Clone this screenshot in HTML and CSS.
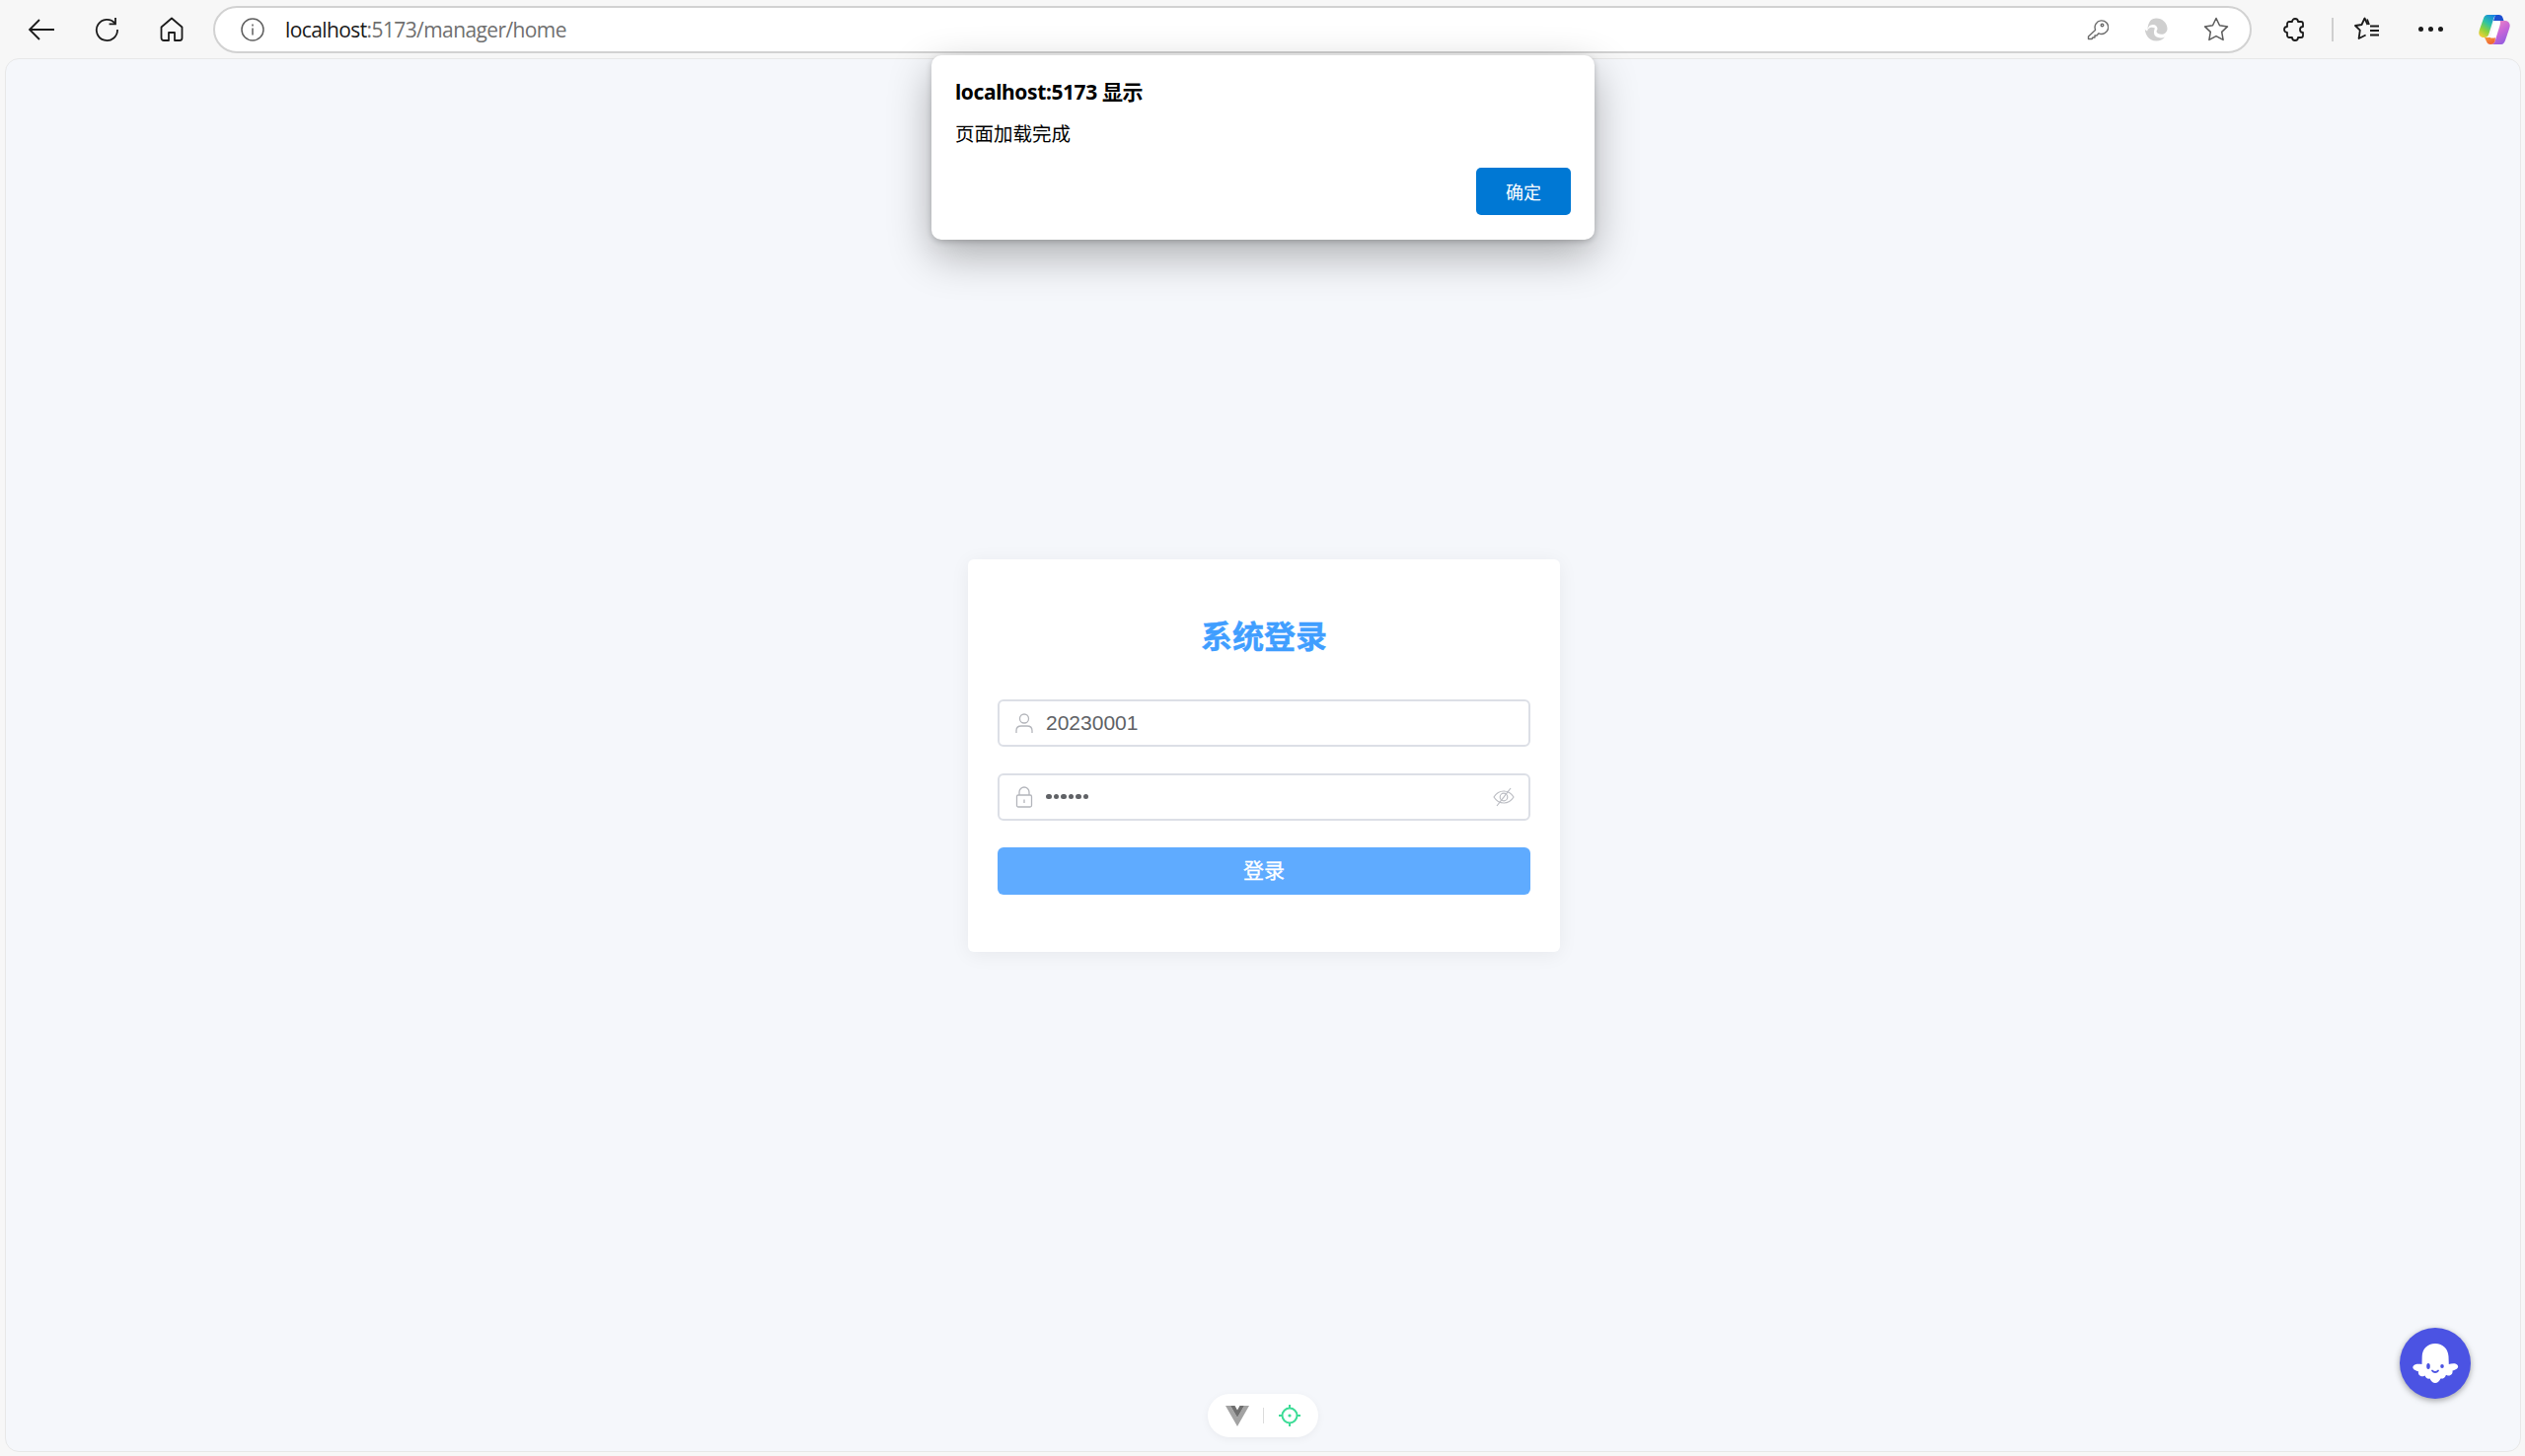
FILE: index.html
```html
<!DOCTYPE html>
<html lang="zh-CN">
<head>
<meta charset="utf-8">
<title>系统登录</title>
<link rel="stylesheet" href="styles.css">
</head>
<body>
<div class="browser">
  <header class="toolbar">
    <div class="nav">
      <span class="tool"><svg width="28" height="24" viewBox="0 0 28 24" fill="none" stroke="#1b1b1b" stroke-width="1.8"><path d="M2 12H27M12 2 2 12l10 10"/></svg></span>
      <span class="tool"><svg width="26" height="26" viewBox="0 0 26 26" fill="none" stroke="#1b1b1b" stroke-width="1.8"><path d="M21.5 6.6A10.6 10.6 0 1 0 24 13"/><path d="M22 1v6.4h-6.4"/></svg></span>
      <span class="tool"><svg width="24" height="26" viewBox="0 0 24 26" fill="none" stroke="#1b1b1b" stroke-width="1.8" stroke-linejoin="round"><path d="M9 24H4a2.500 2.500 0 0 1-2.500-2.500V10.500L12 1.500l10.500 9v11A2.500 2.500 0 0 1 20 24h-5v-8H9z"/></svg></span>
    </div>
    <div class="omnibox">
      <svg class="info" width="24" height="24" viewBox="0 0 24 24" fill="none" stroke="#5f5f5f" stroke-width="1.500"><circle cx="12" cy="12" r="11"/><path d="M12 10.500v7M12 6.500v2"/></svg>
      <span class="url"><span class="host">localhost</span>:5173/manager/home</span>
      <div class="omni-actions">
        <svg width="22" height="22" viewBox="0 0 22 22" fill="none" stroke="#6b6b6b" stroke-width="1.400" stroke-linejoin="round"><path d="M8.500 11.500 1.500 18v2.500h3.500l1-1.500h2v-2h2l2-2.200a6.800 6.800 0 1 0-3.500-3.800z"/><circle cx="15.500" cy="6.500" r="1.300"/></svg>
        <svg width="24" height="24" viewBox="0 0 24 24"><path fill="#cfcfcf" d="M12 0.500C18.800 0.500 23.500 5.500 23.500 11c0 3.500-2.800 5.800-6 5.800-2.400 0-5-1-5-3 0-1 1-1.300 1-2.800C13.500 8.800 11.500 7 9 7 5.500 7 3.500 9.800 3.500 13c0-3 .5-12.500 8.500-12.500z"/><path fill="#cfcfcf" d="M.8 11.500C1 16 4 23.500 12.500 23.500c3.500 0 6.500-1.500 8.500-4-2 1-4.500 1.200-6.800.5-3.800-1-4.200-3.500-4.200-5.500 0-1.500.5-3 1-4C7 9 4 10 3.200 13.500 2.500 13.500 1.500 12.500.8 11.500z"/></svg>
        <svg width="26" height="25" viewBox="0 0 26 25" fill="none" stroke="#5c5c5c" stroke-width="1.500" stroke-linejoin="round"><path d="M13 1.500l3.500 7.300 8 1.100-5.800 5.500 1.400 8-7.100-3.800-7.100 3.800 1.400-8L1.500 9.900l8-1.100z"/></svg>
      </div>
    </div>
    <div class="actions">
      <span class="action puzzle"><svg width="26" height="26" viewBox="0 0 26 26" fill="none" stroke="#1b1b1b" stroke-width="1.800" stroke-linejoin="round"><path d="M10 5a3 3 0 0 1 6 0h3a2 2 0 0 1 2 2v3a3 3 0 0 0 0 6v3a2 2 0 0 1-2 2h-3a3 3 0 0 1-6 0H7a2 2 0 0 1-2-2v-3a3 3 0 0 1 0-6V7a2 2 0 0 1 2-2z"/></svg></span>
      <span class="divider"></span>
      <span class="action fav"><svg width="26" height="25" viewBox="0 0 26 25" fill="none" stroke="#1b1b1b" stroke-width="1.800" stroke-linejoin="round"><path d="M13.500 8 10.500 1.500 7.500 8 1 9l4.800 4.700L4.600 22l7-3.500"/><path d="M13 2.500 15 8M16 9.500h9M16 14h9M16 18.500h9"/></svg></span>
      <span class="action dots"><i></i><i></i><i></i></span>
      <span class="action copilot"><svg width="32" height="32" viewBox="0 0 32 32"><defs><linearGradient id="cpa" x1=".75" y1="0" x2=".15" y2="1"><stop offset="0" stop-color="#1580e6"/><stop offset=".4" stop-color="#2cc3a6"/><stop offset=".7" stop-color="#8fd23a"/><stop offset="1" stop-color="#f7cf3a"/></linearGradient><linearGradient id="cpb" x1=".2" y1="0" x2=".8" y2="1"><stop offset="0" stop-color="#f08ac0"/><stop offset=".5" stop-color="#c765d8"/><stop offset="1" stop-color="#8a5be0"/></linearGradient><linearGradient id="cpc" x1="0" y1="0" x2="1" y2="1"><stop offset="0" stop-color="#f9a23c"/><stop offset="1" stop-color="#e9452f"/></linearGradient></defs><path fill="#1d4fd0" d="M17 1h3.500c2 0 3.500 1 4 3l1 3H15z"/><path fill="url(#cpa)" d="M9 1h11c-2.500 0-4 1.500-4.700 3.500L10.500 20c-.7 2.500-2 4-4.500 4H5c-3 0-5-2.500-4.700-5 .1-1.200.4-2.400.8-3.500L5 4.500C5.800 2.300 7 1 9 1z"/><path fill="url(#cpb)" d="M21 7h6c2.800 0 4.800 2.500 4.700 5-.1 1.200-.4 2.400-.8 3.500L27 27c-.8 2.200-2 4-4 4H12c2.500 0 4-1.500 4.700-3.500L21.500 12c.7-2.500 1-5-.5-5z"/><path fill="url(#cpc)" d="M6 24h8l3-1-.3 4.500C16 29.500 14.500 31 12 31h11H12c-2 0-3.500-1-4-3z"/><path fill="#fff" d="M17.500 7.500H21c.6 0 .9.4.7 1l-4.200 14.500c-.3.900-.9 1.500-1.800 1.500h-3.200c-.4 0-.6-.3-.5-.7l3.800-14.500c.3-1 .9-1.800 1.700-1.800z"/></svg></span>
    </div>
  </header>

  <main class="viewport">
    <section class="login-card">
      <h1 class="login-title">系统登录</h1>
      <div class="field">
        <svg class="field-icon" width="18" height="20" viewBox="0 0 18 20" fill="none" stroke="#b4b6bc" stroke-width="1.300"><circle cx="9" cy="5.500" r="4.500"/><path d="M1 20v-2.500C1 14.500 3 13 6 13h6c3 0 5 1.500 5 4.500V20"/></svg>
        <span class="field-value">20230001</span>
      </div>
      <div class="field">
        <svg class="field-icon" width="18" height="22" viewBox="0 0 18 22" fill="none" stroke="#b4b6bc" stroke-width="1.300"><rect x="1.500" y="9" width="15" height="12" rx="1.500"/><path d="M4 9V6a5 5 0 0 1 10 0v3M9 13.500v3.500"/></svg>
        <span class="field-value secret"><i></i><i></i><i></i><i></i><i></i><i></i></span>
        <svg class="eye" width="22" height="20" viewBox="0 0 22 20" fill="none" stroke="#bcbec4" stroke-width="1.200"><path d="M1 10c2.500-4 6-6 10-6s7.500 2 10 6c-2.500 4-6 6-10 6s-7.500-2-10-6z"/><circle cx="11" cy="10" r="3.800"/><path d="M18 1 4 19"/></svg>
      </div>
      <button class="login-button" type="button">登录</button>
    </section>

    <div class="devtools-pill">
      <svg width="24" height="21" viewBox="0 0 24 21"><path fill="#a3a3a3" d="M0 0h5l7 12L19 0h5L12 21z"/><path fill="#6f6f6f" d="M5 0h4.500L12 4.500 14.500 0H19l-7 12z"/></svg>
      <span class="pill-sep"></span>
      <svg width="22" height="22" viewBox="0 0 22 22" fill="none" stroke="#3ddc97" stroke-width="2"><circle cx="11" cy="11" r="7.500"/><path d="M11 0v3.500M11 18.500V22M0 11h3.500M18.500 11H22"/><circle cx="11" cy="11" r="1.600" fill="#3ddc97" stroke="none"/></svg>
    </div>

    <div class="ghost-button">
      <svg width="48" height="42" viewBox="0 0 48 42"><path fill="#fff" d="M24 1c8 0 13 5.500 13.500 13l.3 8c3-1 8-1.500 9.200 1.500 1 2.500-2.500 4.500-5.500 5 .5 2.500-1 5-4 5-1 0-2-.3-2.500-.8C34 36 31.500 37 29.500 36.500 28 39.500 26 41 24 41s-4-1.500-5.500-4.500c-2 .5-4.500-.5-4.800-3-.5.5-1.500.8-2.700.8-3 0-4.500-2.500-4-5-3-.5-6.500-2.500-5.500-5C3 21 8 21.500 10.500 22l.2-8C11 6.500 16 1 24 1z"/><ellipse cx="17" cy="24" rx="1.800" ry="3" fill="#4b53e3"/><ellipse cx="31" cy="24" rx="1.800" ry="2" fill="#4b53e3"/><path d="M21 28.500c1.500 2 4.500 2 6 0" fill="none" stroke="#4b53e3" stroke-width="1.800" stroke-linecap="round"/></svg>
    </div>

    <div class="alert-dialog" role="alertdialog">
      <div class="alert-title">localhost:5173 显示</div>
      <div class="alert-message">页面加载完成</div>
      <div class="alert-footer"><button class="alert-ok" type="button">确定</button></div>
    </div>
  </main>
</div>
</body>
</html>
```

FILE: styles.css
```css
* { box-sizing: border-box; }

html, body {
  margin: 0;
  height: 100%;
  overflow: hidden;
}

body {
  background: #f7f7f7;
  font-family: "Liberation Sans", "Noto Sans CJK SC", sans-serif;
}

.browser {
  display: flex;
  flex-direction: column;
  height: 100vh;
  padding-bottom: 4px;
}

.toolbar {
  display: flex;
  align-items: center;
  height: 59px;
  flex: none;
  padding: 0 7px 0 0;
}

.nav {
  display: flex;
  align-items: center;
  width: 216px;
  padding-left: 9px;
  flex: none;
}

.tool {
  display: flex;
  justify-content: center;
  width: 66px;
}

.omnibox {
  display: flex;
  align-items: center;
  width: 2066px;
  height: 48px;
  flex: none;
  padding: 0 21px 0 26px;
  background: #fff;
  border: 2px solid #d2d2d2;
  border-radius: 24px;
}

.url {
  margin-left: 21px;
  font-family: "Open Sans", "Noto Sans", sans-serif;
  font-size: 21px;
  letter-spacing: -0.6px;
  color: #6f6f6f;
  white-space: nowrap;
}

.host { color: #1a1a1a; }

.omni-actions {
  display: flex;
  align-items: center;
  gap: 36px;
  margin-left: auto;
}

.actions {
  display: flex;
  align-items: center;
  flex: 1;
  padding-left: 31px;
}

.action {
  display: flex;
  justify-content: center;
  align-items: center;
}

.puzzle { width: 26px; }

.divider {
  width: 2px;
  height: 24px;
  margin: 0 24px;
  background: #cfcfcf;
}

.fav {
  width: 26px;
  margin-left: -3px;
}

.dots {
  gap: 5px;
  margin-left: 39px;
}

.dots i {
  width: 5px;
  height: 5px;
  border-radius: 50%;
  background: #1b1b1b;
}

.copilot { margin-left: 36px; }

.viewport {
  position: relative;
  flex: 1;
  display: flex;
  justify-content: center;
  align-items: center;
  margin: 0 4px 0 5px;
  padding-left: 2px;
  background: #f5f7fb;
  border: 1px solid #e8e8e8;
  border-radius: 14px;
}

.login-card {
  width: 600px;
  height: 398px;
  padding: 50px 30px 0;
  background: #fff;
  border-radius: 6px;
  box-shadow: 0 3px 20px rgba(0, 0, 0, 0.06);
}

.login-title {
  margin: 0 0 34px;
  font-size: 32px;
  line-height: 58px;
  font-weight: 700;
  text-align: center;
  color: #409eff;
  -webkit-text-stroke: 0.4px #409eff;
}

.field {
  display: flex;
  align-items: center;
  height: 48px;
  margin-bottom: 27px;
  padding: 0 14px 0 16px;
  border: 2px solid #dcdfe6;
  border-radius: 6px;
}

.field-icon { flex: none; }

.field-value {
  margin-left: 13px;
  font-size: 21px;
  color: #606266;
}

.secret {
  display: flex;
  gap: 2px;
}

.secret i {
  width: 5.500px;
  height: 5.500px;
  border-radius: 50%;
  background: #606266;
}

.eye { margin-left: auto; }

.login-button {
  display: block;
  width: 100%;
  height: 48px;
  padding: 0 0 3px;
  border: 0;
  border-radius: 6px;
  background: #5fabff;
  font-family: inherit;
  font-size: 21px;
  color: #fff;
  -webkit-text-stroke: 0.3px #fff;
}

.devtools-pill {
  position: absolute;
  left: 1218px;
  bottom: 14px;
  display: flex;
  align-items: center;
  width: 112px;
  height: 44px;
  padding-left: 18px;
  background: #fff;
  border-radius: 22px;
  box-shadow: 0 2px 8px rgba(0, 0, 0, 0.05);
}

.pill-sep {
  width: 1px;
  height: 16px;
  margin: 0 15px 0 14px;
  background: #dcdcdc;
}

.ghost-button {
  position: absolute;
  right: 50px;
  bottom: 53px;
  display: flex;
  justify-content: center;
  align-items: center;
  width: 72px;
  height: 72px;
  background: #4b53e3;
  border-radius: 50%;
  box-shadow: 0 2px 6px rgba(0, 0, 0, 0.35);
}

.alert-dialog {
  position: absolute;
  top: -4px;
  left: 938px;
  width: 672px;
  height: 187px;
  padding: 24px 24px 24px;
  background: #fff;
  border-radius: 10px;
  box-shadow: 0 16px 44px rgba(0, 0, 0, 0.3), 0 2px 6px rgba(0, 0, 0, 0.2);
  font-family: "Noto Sans", "Noto Sans CJK SC", sans-serif;
  color: #000;
}

.alert-title {
  font-size: 21px;
  line-height: 26px;
  font-weight: 700;
  letter-spacing: -0.4px;
}

.alert-message {
  margin-top: 17px;
  font-size: 19.500px;
  line-height: 26px;
}

.alert-footer {
  display: flex;
  justify-content: flex-end;
  margin-top: 21px;
}

.alert-ok {
  width: 96px;
  height: 48px;
  padding: 0;
  border: 0;
  border-radius: 5px;
  background: #0078d4;
  font-family: inherit;
  font-size: 18px;
  color: #fff;
}
```
